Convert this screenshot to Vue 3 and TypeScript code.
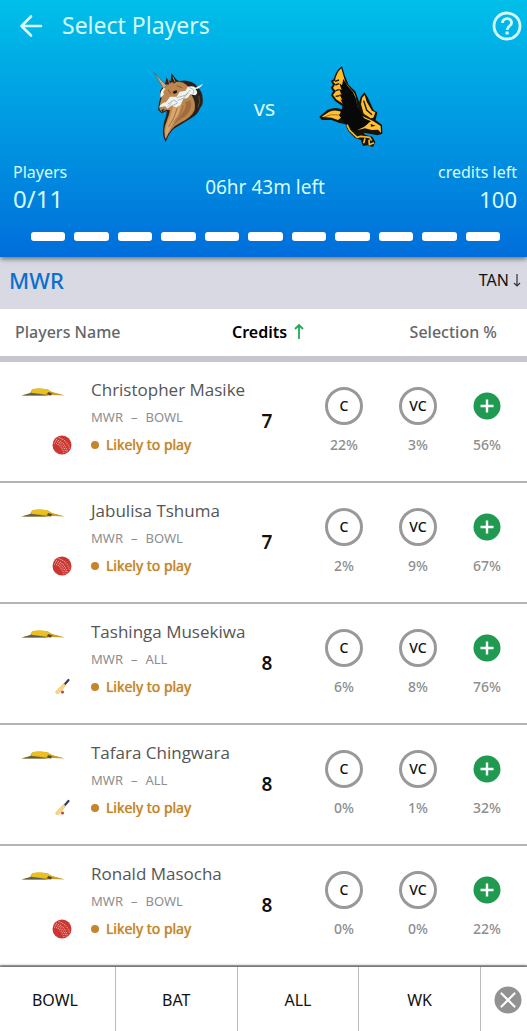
<script setup lang="ts">
import { ref } from 'vue'

type Role = 'BOWL' | 'ALL'

interface Player {
  name: string
  role: Role
  credits: number
  captain: number
  vice: number
  selection: number
}

const players: Player[] = [
  { name: 'Christopher Masike', role: 'BOWL', credits: 7, captain: 22, vice: 3, selection: 56 },
  { name: 'Jabulisa Tshuma', role: 'BOWL', credits: 7, captain: 2, vice: 9, selection: 67 },
  { name: 'Tashinga Musekiwa', role: 'ALL', credits: 8, captain: 6, vice: 8, selection: 76 },
  { name: 'Tafara Chingwara', role: 'ALL', credits: 8, captain: 0, vice: 1, selection: 32 },
  { name: 'Ronald Masocha', role: 'BOWL', credits: 8, captain: 0, vice: 0, selection: 22 },
]

const filters = ['BOWL', 'BAT', 'ALL', 'WK']
const squadSize = 11
const team = ref('MWR')
</script>

<template>
  <div class="app">
    <header class="hero">
      <div class="topbar">
        <button class="icon-btn" aria-label="Back">
          <svg width="24" height="24" viewBox="0 0 24 24" fill="none" stroke="#d6fbff" stroke-width="2.600" stroke-linecap="round" stroke-linejoin="round">
            <path d="M22 12H3M12 2.500 2.500 12l9.500 9.500" />
          </svg>
        </button>
        <h1>Select Players</h1>
        <button class="icon-btn" aria-label="Help">
          <svg width="30" height="30" viewBox="0 0 30 30" fill="none" stroke="#d6fbff" stroke-width="2.800">
            <circle cx="15" cy="15" r="13" />
            <path d="M10.500 12c0-2.600 2-4.300 4.600-4.300s4.500 1.700 4.500 4c0 3.300-4.500 3.400-4.500 7.300" />
            <path d="M13.500 22h3.200" stroke-width="3" />
          </svg>
        </button>
      </div>

      <div class="match">
        <div class="crest">
          <svg width="53" height="72" viewBox="33 36 159 216" role="img" aria-label="MWR">
            <path d="M78 62 92 66 94 43 110 62 119 67Q133 62 146 67Q164 70 172 84Q187 96 188 118Q191 136 180 148Q174 166 156 176L114 202Q90 213 77 249Q67 231 69 207Q72 184 79 168L80 156 65 163 54 152 57 132 62 112 60 95 75 78Z" fill="#2a211c" />
            <path d="M76 78 96 70 113 68Q130 67 143 81L156 110Q168 130 164 153Q154 176 121 191Q90 206 77 241Q70 218 75 200L87 166 90 154 80 152 65 159 58 150 60 135 66 112 70 95Z" fill="#bb864f" />
            <path d="M124 132Q120 172 95 200L77 238Q73 218 79 198L92 168 98 145Z" fill="#d9a568" />
            <path d="M152 124Q158 150 136 172Q112 184 94 206Q108 184 124 166Q142 146 136 130" fill="#a06c3e" />
            <path d="M130 140Q124 168 100 190M112 146Q106 174 86 204" fill="none" stroke="#a4703f" stroke-width="3" />
            <path d="M42 41 80 80 71 89Z" fill="#c8ab84" stroke="#665342" stroke-width="2" />
            <path d="M77 54 92 72 83 78ZM94 41 110 68 101 74Z" fill="#25252b" />
            <path d="M85 64 89 75M99 54 105 69" stroke="#b77a4e" stroke-width="3" />
            <path d="M72 86Q57 98 62 117L72 106Q67 98 76 90M57 145Q66 130 78 130L90 113 110 113 119 98 137 95 143 83Q160 80 167 86L189 74Q181 89 166 90Q177 101 166 109L150 106Q145 121 131 118L122 137 109 145 94 140 82 149 76 142Z" fill="#eef4f3" />
            <path d="m83 135 19-12 10 7M93 142l20-10M110 116l26-7 15-16M113 124l17-6 14-16M148 86q20 5 11 18M82 144l13-12" fill="none" stroke="#8e9998" stroke-width="2" />
            <path d="m97 99 12-6 3 7-9 5ZM64 153l10-4-7 10Z" fill="#181510" />
            <path d="M84 92 92 104M110 80l16 6" stroke="#8a5833" stroke-width="3" />
            <path d="M176 110Q183 128 174 145" fill="none" stroke="#6d482e" stroke-width="3" />
          </svg>
        </div>
        <span class="vs">vs</span>
        <div class="crest">
          <svg width="65" height="84" viewBox="42 33 195 252" role="img" aria-label="TAN">
            <path d="M111 37Q92 50 86 76L77 81 84 92 77 101 84 112 78 124 90 141 113 157 113 167Q92 157 68 167L43 188 50 198 80 198 101 206 121 211 130 232 151 253 167 257 174 276 187 274 204 279 211 264 202 248 180 242 176 236 218 244 232 239 231 213 212 198 217 175 206 169 188 130 178 115 167 128 163 145 151 112 131 93 119 64Z" fill="#17120a" />
            <path d="M109 43Q94 56 90 80L84 83 91 90 84 102 93 111 84 123 95 137 116 150 158 162 151 125 147 116 132 99 121 85 115 64Z" fill="#ffbd2b" />
            <path d="M115 75 128 96 144 114 152 132 160 168 116 154 106 136 112 138 103 120 110 123 102 104 110 108 103 88 111 94Z" fill="#080808" />
            <path d="m90 82 12-4M91 93l11-4M92 110l10-3M92 127l12-2" fill="none" stroke="#17120a" stroke-width="4" />
            <path d="M50 188 73 173Q97 164 115 177L99 183 113 187 99 198 80 191Z" fill="#ffc12f" />
            <path d="m57 189 22-7 20 1" fill="none" stroke="#a97516" stroke-width="3" />
            <path d="m113 157 43 0 18 31 29 17-25 20-31 5-20-17-24-28Z" fill="#080808" />
            <path d="m179 123-8 9-3 19 8 28 21 14 8-2 6-16-10-5-16-27Z" fill="#ffc12f" />
            <path d="m176 140 9 28 16 14" fill="none" stroke="#17120a" stroke-width="4" />
            <path d="m172 186 32 15 23 15 1 20-9-9-19 1-20-5-24 6 22-11 12-10Z" fill="#ffc12f" />
            <path d="M156 166q6 22 28 30l14 6-18 12-26 2-20-12Z" fill="#080808" />
            <path d="m197 210 15 5-14 3Z" fill="#17120a" />
            <path d="m126 212 8 17 22 21 11-3 27 3 6 10M180 253l-4 15M192 257l1 15 14-6" fill="none" stroke="#f2b832" stroke-width="5" stroke-linejoin="round" />
          </svg>
        </div>
      </div>

      <div class="stats">
        <div class="stat">
          <span class="stat-label">Players</span>
          <span class="stat-value count">0/11</span>
        </div>
        <div class="timer">06hr 43m left</div>
        <div class="stat end">
          <span class="stat-label">credits left</span>
          <span class="stat-value">100</span>
        </div>
      </div>

      <div class="slots">
        <span v-for="n in squadSize" :key="n" class="slot"></span>
      </div>
    </header>

    <nav class="teams" aria-label="Teams">
      <button class="team-active" @click="team = 'MWR'">MWR</button>
      <button class="team-other" @click="team = 'TAN'">
        TAN
        <svg width="8" height="13" viewBox="0 0 8 13" fill="none" stroke="#333" stroke-width="1.200"><path d="M4 0v12M1 9l3 3 3-3" /></svg>
      </button>
    </nav>

    <div class="columns">
      <span class="col-name">Players Name</span>
      <button class="col-credits">
        Credits
        <svg width="10" height="17" viewBox="0 0 10 17" fill="none" stroke="#1fab59" stroke-width="1.800"><path d="M5 16V2M1 6l4-4 4 4" /></svg>
      </button>
      <span class="col-selection">Selection %</span>
    </div>

    <main class="list">
      <article v-for="p in players" :key="p.name" class="player">
        <div class="avatar">
          <svg class="cap" width="44" height="8" viewBox="0 0 44 8" aria-hidden="true">
            <path d="M0 7.500 9 5 11 1.500Q17-.4 27 1.500L31 4 44 7.500 31 7 27 7.500Z" fill="#c99a24" />
            <path d="M10 4 12 1Q18 0 27 1.500L31 5 22 6 12 5Z" fill="#ecc01f" />
            <path d="M1 7.500 10 5 19 6 27 7.500Z" fill="#59604e" />
            <path d="m27 4 4 1-1 2.500-4-1Z" fill="#5c4a25" />
            <path d="m30 4 12 3-9-1Z" fill="#d99f30" />
          </svg>
          <svg v-if="p.role === 'BOWL'" class="role" width="20" height="20" viewBox="0 0 20 20" aria-hidden="true">
            <circle cx="10" cy="10" r="9.500" fill="#cb3632" />
            <path d="M4 4.500Q13 7 15.500 17M6.500 2.500Q16 6 17.500 14M2 8Q9 9 12 18M3 6Q11 8 14 17.500" fill="none" stroke="#efaea6" stroke-width="1.100" stroke-dasharray="1 1" />
          </svg>
          <svg v-else class="role" width="20" height="20" viewBox="0 0 20 20" aria-hidden="true">
            <path d="M13 7 16.500 3" stroke="#353b58" stroke-width="2.200" stroke-linecap="round" />
            <path d="M11.500 6 14 8.500 7 16.500Q4 18 3 15Z" fill="#f4cd75" />
            <path d="m12 8-7 8" stroke="#fbe4a4" stroke-width="1" />
            <circle cx="10.500" cy="15" r="1.600" fill="#cb473b" />
          </svg>
        </div>
        <div class="info">
          <h2>{{ p.name }}</h2>
          <p class="meta"><span>MWR</span><span>–</span><span>{{ p.role }}</span></p>
          <p class="likely"><span class="dot"></span>Likely to play</p>
        </div>
        <div class="credits">{{ p.credits }}</div>
        <div class="pick">
          <button class="ring" :aria-label="`Captain ${p.name}`">C</button>
          <span>{{ p.captain }}%</span>
        </div>
        <div class="pick">
          <button class="ring" :aria-label="`Vice captain ${p.name}`">VC</button>
          <span>{{ p.vice }}%</span>
        </div>
        <div class="pick">
          <button class="add" :aria-label="`Add ${p.name}`">
            <svg width="28" height="28" viewBox="0 0 28 28">
              <circle cx="14" cy="14" r="13.500" fill="#1f9a50" />
              <path d="M14 7.500v13M7.500 14h13" stroke="#fff" stroke-width="2.400" />
            </svg>
          </button>
          <span>{{ p.selection }}%</span>
        </div>
      </article>
    </main>

    <footer class="filters">
      <button v-for="f in filters" :key="f" class="filter">{{ f }}</button>
      <button class="close" aria-label="Clear filter">
        <svg width="28" height="28" viewBox="0 0 28 28">
          <circle cx="14" cy="14" r="13.500" fill="#929292" />
          <path d="m7.500 7.500 13 13M20.500 7.500l-13 13" stroke="#fff" stroke-width="2.200" stroke-linecap="round" />
        </svg>
      </button>
    </footer>
  </div>
</template>

<style>
body {
  margin: 0;
  background: #fff;
}
</style>

<style scoped>
.app {
  display: flex;
  flex-direction: column;
  min-height: 100vh;
  background: #fff;
  font-family: "Noto Sans", sans-serif;
  color: #111;
}
button {
  padding: 0;
  border: 0;
  background: none;
  font: inherit;
  color: inherit;
  cursor: pointer;
}
svg {
  display: block;
  flex: none;
}
h1, h2, p {
  margin: 0;
  font-weight: 400;
}
.hero {
  position: relative;
  z-index: 1;
  padding-bottom: 16px;
  background: linear-gradient(#00bfe9, #0090e0 60%, #006edb);
  box-shadow: 0 2px 5px rgba(0, 0, 0, 0.5);
  color: #d6fbff;
}
.topbar {
  display: flex;
  align-items: center;
  height: 52px;
  padding: 0 5px 0 19px;
}
.topbar h1 {
  flex: 1;
  margin-left: 19px;
  padding-bottom: 2px;
  font-size: 23px;
  line-height: 30px;
}
.match {
  display: flex;
  align-items: center;
  justify-content: center;
  gap: 43px;
  height: 110px;
  padding-left: 2px;
}
.crest {
  display: flex;
  justify-content: center;
  width: 66px;
}
.vs {
  font-size: 22px;
  line-height: 28px;
}
.stats {
  display: grid;
  grid-template-columns: 1fr auto 1fr;
  align-items: center;
  padding: 0 10px 0 13px;
}
.stat {
  display: flex;
  flex-direction: column;
}
.end {
  align-items: flex-end;
}
.stat-label {
  font-size: 16px;
  line-height: 20px;
}
.stat-value {
  font-size: 22px;
  line-height: 34px;
}
.count {
  font-size: 24px;
}
.timer {
  padding-bottom: 5px;
  font-size: 19px;
  line-height: 24px;
}
.slots {
  display: flex;
  gap: 9px;
  margin-top: 16px;
  padding: 0 27px 0 31px;
}
.slot {
  flex: 1;
  height: 9px;
  border-radius: 3px;
  background: #fff;
}
.teams {
  display: flex;
  align-items: center;
  justify-content: space-between;
  height: 52px;
  padding: 0 6px 6px 9px;
  box-sizing: border-box;
  background: #d9d9e3;
}
.team-active {
  font-size: 22px;
  font-weight: 500;
  color: #0b6fce;
}
.team-other {
  display: flex;
  align-items: center;
  gap: 4px;
  font-size: 16px;
}
.columns {
  display: grid;
  grid-template-columns: 1fr auto 1fr;
  align-items: center;
  height: 45px;
  padding: 0 30px 2px 15px;
  border-bottom: 6px solid #c6c6ce;
  font-size: 16px;
  font-weight: 500;
  color: #666;
}
.col-credits {
  display: flex;
  align-items: center;
  gap: 7px;
  margin-left: 24px;
  font-weight: 600;
  color: #000;
}
.col-selection {
  text-align: right;
}
.list {
  flex: 1;
}
.player {
  display: grid;
  grid-template-columns: 91px minmax(0, 1fr) 64px 90px 58px 80px;
  height: 119px;
  border-bottom: 2px solid #b4b4b8;
}
.avatar {
  display: flex;
  flex-direction: column;
  align-items: flex-end;
  justify-content: space-between;
  height: 67px;
  padding: 26px 19px 0 21px;
}
.cap {
  align-self: flex-start;
}
.info {
  padding-top: 16px;
  white-space: nowrap;
}
.info h2 {
  font-family: "Open Sans", "Noto Sans", sans-serif;
  font-size: 17px;
  line-height: 24px;
  color: #555;
}
.meta {
  display: flex;
  gap: 8px;
  font-size: 13px;
  line-height: 30px;
  color: #8e8e8e;
}
.likely {
  display: flex;
  align-items: center;
  gap: 7px;
  font-size: 14px;
  line-height: 26px;
  color: #c4852d;
  text-shadow: 0 0 1px #c4852d;
}
.dot {
  width: 8px;
  height: 8px;
  border-radius: 50%;
  background: #c4852d;
}
.credits {
  font-size: 19px;
  font-weight: 600;
  line-height: 118px;
  text-align: center;
}
.pick {
  display: flex;
  flex-direction: column;
  align-items: center;
  gap: 9px;
  padding-top: 25px;
  font-size: 14px;
  font-weight: 500;
  line-height: 22px;
  color: #8e8e8e;
}
.ring, .add {
  display: flex;
  align-items: center;
  justify-content: center;
  box-sizing: border-box;
  width: 38px;
  height: 38px;
  border-radius: 50%;
}
.ring {
  border: 3px solid #999;
  font-size: 14px;
  font-weight: 500;
  line-height: 20px;
  color: #111;
}
.filters {
  position: sticky;
  bottom: 0;
  display: flex;
  height: 65px;
  background: #fff;
  box-shadow: 0 -1px 3px rgba(0, 0, 0, 0.5);
}
.filter {
  flex: 122 1 0;
  border-right: 1px solid #bbb;
  font-size: 16px;
}
.filter:first-child {
  flex-grow: 111;
  padding-right: 5px;
}
.close {
  display: flex;
  align-items: center;
  justify-content: flex-end;
  width: 46px;
  padding-right: 5px;
}
</style>
